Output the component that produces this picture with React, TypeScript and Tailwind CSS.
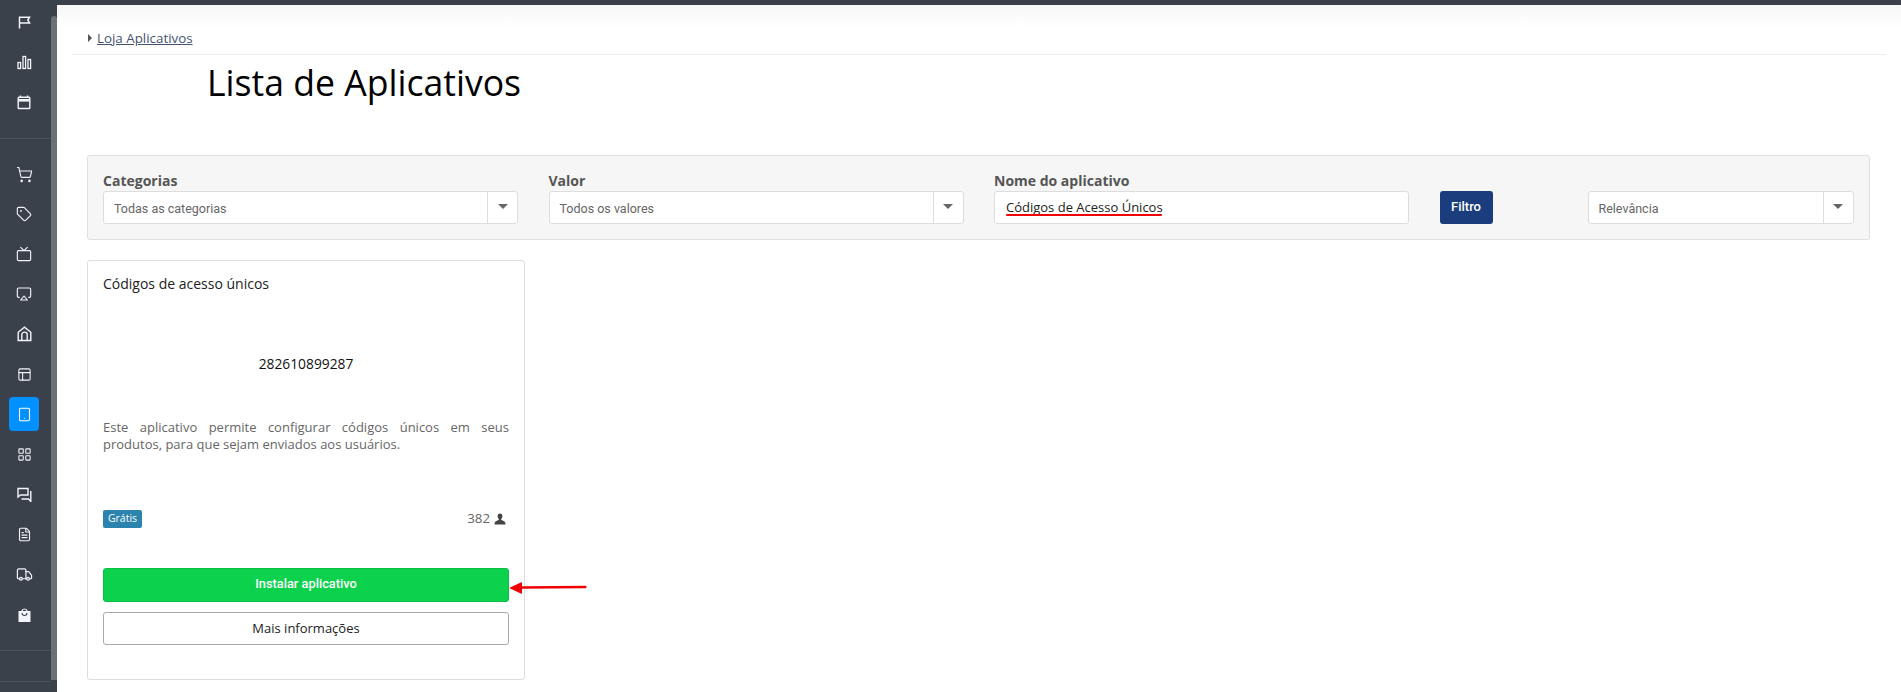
import {
  Airplay,
  FileText,
  LayoutGrid,
  PanelsTopLeft,
  ShoppingCart,
  Tablet,
  Tag,
  Truck,
  Tv,
} from "lucide-react";
import type { ReactNode } from "react";

const FlagIcon = () => (
  <svg width="13" height="13" viewBox="0 0 13 13" fill="none" stroke="currentColor" strokeWidth="1.5">
    <path d="M1.500 12.500V1.200h10l-1.700 2.800 1.700 2.900H1.500" />
  </svg>
);

const BarsIcon = () => (
  <svg width="15" height="15" viewBox="0 0 15 15" fill="none" stroke="currentColor" strokeWidth="1.3">
    <rect x="1" y="7.500" width="2.600" height="6" />
    <rect x="6" y="1.500" width="2.600" height="12" />
    <rect x="11" y="4.500" width="2.600" height="9" />
  </svg>
);

const CalendarIcon = () => (
  <svg width="14" height="15" viewBox="0 0 14 15" fill="none" stroke="currentColor" strokeWidth="1.4">
    <path d="M3.500 0.500v2.500M10.500 0.500v2.500" />
    <rect x="1.200" y="2.200" width="11.600" height="11.300" rx="0.800" />
    <path d="M1.200 5.300h11.600" strokeWidth="2.600" />
  </svg>
);

const HomeIcon = () => (
  <svg width="15" height="16" viewBox="0 0 15 16" fill="none" stroke="currentColor" strokeWidth="1.4">
    <path d="M1.200 14.500V6.300L7.500 1.200l6.300 5.100v8.200z" />
    <path d="M4.800 14.500V8.800a2.700 2.700 0 0 1 5.400 0v5.700" />
  </svg>
);

const ChatIcon = () => (
  <svg width="15" height="15" viewBox="0 0 15 15" fill="none" stroke="currentColor" strokeWidth="1.4">
    <path d="M1 1.500h10v6.500H3.500L1 10z" />
    <path d="M13.800 4v10.500L11.500 12H4.500" />
  </svg>
);

const BagIcon = () => (
  <svg width="13" height="15" viewBox="0 0 13 15">
    <path
      fill="currentColor"
      fillRule="evenodd"
      d="M0.500 4h2.700a3.400 3.400 0 0 1 6.600 0h2.700v11H0.500zM4.600 4a2 2 0 0 1 3.800 0zM3.500 6a3 3 0 0 0 6 0H8.400a1.900 1.900 0 0 1-3.800 0z"
    />
  </svg>
);

const Caret = () => (
  <span className="flex w-[30px] items-center justify-center border-l border-[#ddd] pb-[2px]">
    <span className="h-0 w-0 border-x-[5px] border-t-[5px] border-x-transparent border-t-[#666]" />
  </span>
);

const SelectBox = ({ label, className }: { label: string; className: string }) => (
  <div className={`flex h-[33px] rounded-[3px] border border-[#ddd] bg-white ${className}`}>
    <span className="flex-1 pl-[10px] font-['Roboto',sans-serif] text-[12.5px] leading-[33px] text-[#666]">
      {label}
    </span>
    <Caret />
  </div>
);

const Field = ({ label, children }: { label: string; children: ReactNode }) => (
  <div className="flex w-[415px] flex-col">
    <label className="h-[19px] text-[14px] font-bold leading-[18px] text-[#555]">{label}</label>
    {children}
  </div>
);

const SideItem = ({ children, active }: { children: ReactNode; active?: boolean }) => (
  <div className="flex h-[40px] items-center justify-center pr-[3px] text-[#f1f5f9]">
    <div
      className={`flex h-[34px] w-[30px] items-center justify-center rounded-[4px] ${active ? "bg-[#0090ff] text-white" : ""}`}
    >
      {children}
    </div>
  </div>
);

const Sidebar = () => (
  <aside className="flex h-full w-[57px] shrink-0 bg-[#3a414b]">
    <div className="w-[51px] shrink-0">
      <div className="flex h-[133px] flex-col">
        <div className="-mt-[3px]">
          <SideItem><FlagIcon /></SideItem>
        </div>
        <SideItem><BarsIcon /></SideItem>
        <SideItem><CalendarIcon /></SideItem>
      </div>
      <div className="h-px bg-[#4a525c]" />
      <div className="flex flex-col pt-[15px]">
        <SideItem><ShoppingCart size={17} strokeWidth={1.6} /></SideItem>
        <SideItem><Tag size={16} strokeWidth={1.7} /></SideItem>
        <SideItem><Tv size={16} strokeWidth={1.7} /></SideItem>
        <SideItem><Airplay size={16} strokeWidth={1.7} /></SideItem>
        <SideItem><HomeIcon /></SideItem>
        <SideItem><PanelsTopLeft size={15} strokeWidth={1.7} /></SideItem>
        <SideItem active><Tablet size={15} strokeWidth={1.8} /></SideItem>
        <SideItem><LayoutGrid size={15} strokeWidth={1.7} /></SideItem>
        <SideItem><ChatIcon /></SideItem>
        <SideItem><FileText size={15} strokeWidth={1.8} /></SideItem>
        <SideItem><Truck size={17} strokeWidth={1.7} /></SideItem>
        <SideItem><BagIcon /></SideItem>
      </div>
      <div className="mt-[16px] h-px bg-[#4a525c]" />
      <div className="mt-[30px] h-px bg-[#4a525c]" />
    </div>
    <div className="mt-[11px] h-[664px] w-[6px] rounded-t-[3px] bg-[#6c7177]" />
  </aside>
);

const AppCard = () => (
  <div className="relative flex h-[420px] w-[438px] flex-col rounded-[3px] border border-[#ddd] bg-white px-[15px]">
    <h3 className="mt-[13px] text-[14px] font-medium leading-[20px] text-[#222]">Códigos de acesso únicos</h3>
    <p className="mt-[60px] text-center text-[13.800px] leading-[20px] text-[#111]">282610899287</p>
    <p className="mt-[45px] text-justify text-[13px] leading-[16.500px] text-[#666]">
      Este aplicativo permite configurar códigos únicos em seus produtos, para que sejam enviados aos usuários.
    </p>
    <div className="mt-[57px] flex items-center justify-between">
      <span className="flex h-[18px] w-[39px] items-center justify-center rounded-[2px] bg-[#2b83ae] text-[10.500px] font-medium text-white">
        Grátis
      </span>
      <span className="flex items-center gap-[4px] pr-[3px] text-[13.300px] text-[#666]">
        382
        <svg width="12" height="12" viewBox="0 0 13 12" fill="#444">
          <path d="M6.500 0C4.800 0 3.900 1.300 3.900 3c0 1.200.5 2.300 1.300 3v1.100C3 7.800.8 8.600.6 10.500V12h11.800v-1.500c-.2-1.900-2.400-2.700-4.600-3.400V6c.8-.7 1.300-1.800 1.300-3 0-1.700-.9-3-2.600-3z" />
        </svg>
      </span>
    </div>
    <button className="mt-[39px] h-[34px] rounded-[3px] border border-[#0cc044] bg-[#0bd14c] pb-[2px] font-['Roboto',sans-serif] text-[12.800px] font-medium text-white">
      Instalar aplicativo
    </button>
    <button className="mt-[10px] h-[33px] rounded-[3px] border border-[#aaa] bg-white text-[13px] text-[#222]">
      Mais informações
    </button>
    {/* seta vermelha */}
    <svg className="absolute left-[421px] top-[319px]" width="80" height="16" viewBox="0 0 80 16">
      <path d="M0 8l13-6v4.300l64-.6.600 1.200-.6 1.300-64 .6V14z" fill="#f00000" />
    </svg>
  </div>
);

export default function App() {
  return (
    <div className="flex h-[692px] w-full flex-col overflow-hidden bg-white font-['Open_Sans',sans-serif]">
      <div className="h-[5px] shrink-0 bg-[#3a414b]" />
      <div className="flex min-h-0 flex-1">
        <Sidebar />
        <main className="min-w-0 flex-1">
          <div className="bg-gradient-to-b from-[#f7f7f7] to-white to-[45%]">
            <div className="mx-[15px] flex h-[50px] items-center gap-[5px] border-b border-[#eee] pb-[2px] pl-[16px] pt-[19px]">
              <span className="h-0 w-0 border-y-[4px] border-l-[4px] border-y-transparent border-l-[#555]" />
              <a className="text-[13.350px] text-[#44546f] underline">Loja Aplicativos</a>
            </div>
          </div>
          <h1 className="ml-[150px] mt-[3px] text-[35.600px] leading-[49px] text-black">Lista de Aplicativos</h1>
          <div className="ml-[30px] mr-[31px] mt-[48px] flex h-[85px] items-start gap-[30.500px] rounded-[3px] border border-[#e0e0e0] bg-[#f6f6f6] px-[15px] pt-[16px]">
            <Field label="Categorias"><SelectBox label="Todas as categorias" className="w-full" /></Field>
            <Field label="Valor"><SelectBox label="Todos os valores" className="w-full" /></Field>
            <Field label="Nome do aplicativo">
              <div className="relative h-[33px] rounded-[3px] border border-[#ddd] bg-white pl-[11px] text-[13px] leading-[31px] text-[#222]">
                Códigos de Acesso Únicos
                <span className="absolute left-[11px] top-[22px] h-[2px] w-[156px] rounded-full bg-[#f00000]" />
              </div>
            </Field>
            <button className="mt-[19px] h-[33px] w-[53px] rounded-[3px] bg-[#1b3d7d] pb-[1px] font-['Roboto',sans-serif] text-[13px] font-medium text-white">
              Filtro
            </button>
            <SelectBox label="Relevância" className="ml-[64.500px] mt-[19px] w-[266px]" />
          </div>
          <div className="ml-[30px] mt-[20px]">
            <AppCard />
          </div>
        </main>
      </div>
    </div>
  );
}
